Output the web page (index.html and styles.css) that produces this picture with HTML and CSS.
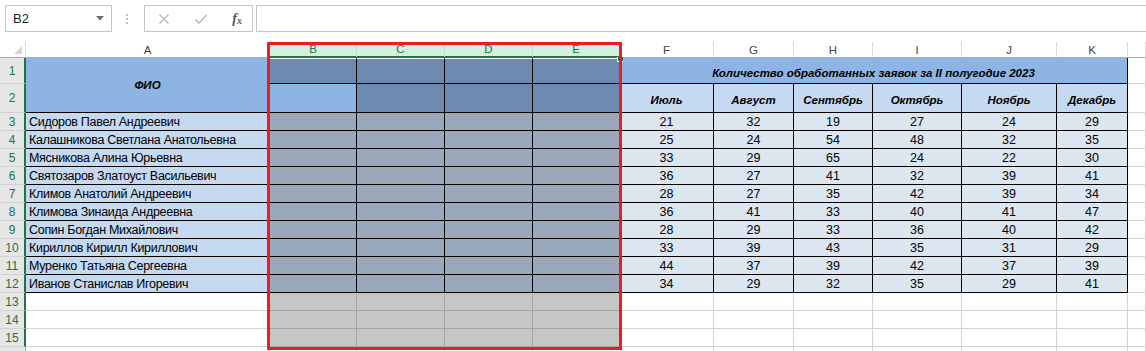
FILE: index.html
```html
<!DOCTYPE html>
<html lang="ru">
<head>
    <meta charset="UTF-8">
    <title>Книга1 - Excel</title>
    <link rel="stylesheet" href="styles.css">
</head>
<body>
    <!-- formula bar -->
    <div class="formula-bar">
        <div class="name-box">
            <span>B2</span>
            <svg class="drop" width="8" height="5" viewBox="0 0 8 5"><polygon points="0,0 8,0 4,4.5" fill="#6f6f6f"/></svg>
        </div>
        <svg class="grip" width="4" height="12" viewBox="0 0 4 12">
            <circle cx="2" cy="2" r="1.1" fill="#b3b3b3"/>
            <circle cx="2" cy="6" r="1.1" fill="#b3b3b3"/>
            <circle cx="2" cy="10" r="1.1" fill="#b3b3b3"/>
        </svg>
        <div class="fx-box">
            <svg width="12" height="12" viewBox="0 0 12 12"><path d="M1.5 1.5 L10.5 10.5 M10.5 1.5 L1.5 10.5" stroke="#bcbcbc" stroke-width="1.4"/></svg>
            <svg width="14" height="12" viewBox="0 0 14 12"><path d="M1.5 6.5 L5 10 L12.5 2" stroke="#c2c2c2" stroke-width="1.8" fill="none"/></svg>
            <span class="fx">f<sub>x</sub></span>
        </div>
        <div class="formula-input"></div>
    </div>

    <div class="sheet">
        <!-- column headers -->
        <div class="corner">
            <svg width="8" height="8" viewBox="0 0 8 8"><polygon points="8,0 8,8 0,8" fill="#d5d5d5"/></svg>
        </div>
        <div class="ch">A</div>
        <div class="ch sel">B</div>
        <div class="ch sel">C</div>
        <div class="ch sel">D</div>
        <div class="ch sel">E</div>
        <div class="ch">F</div>
        <div class="ch">G</div>
        <div class="ch">H</div>
        <div class="ch">I</div>
        <div class="ch">J</div>
        <div class="ch">K</div>
        <div class="ch"></div>

        <!-- row 1 -->
        <div class="rh">1</div>
        <div class="c t b1 head fio">ФИО</div>
        <div class="c t s1 top"></div><div class="c t s1 top"></div><div class="c t s1 top"></div><div class="c t s1 top"></div>
        <div class="c t b1 head title">Количество обработанных заявок за II полугодие 2023</div>
        <div class="c"></div>

        <!-- row 2 -->
        <div class="rh">2</div>
        <div class="c t b1"></div>
        <div class="c t s1"></div><div class="c t s1"></div><div class="c t s1"></div>
        <div class="c t b2 head month">Июль</div>
        <div class="c t b2 head month">Август</div>
        <div class="c t b2 head month">Сентябрь</div>
        <div class="c t b2 head month">Октябрь</div>
        <div class="c t b2 head month">Ноябрь</div>
        <div class="c t b2 head month">Декабрь</div>
        <div class="c"></div>

        <!-- data rows -->
        <div class="rh">3</div><div class="c t b2 name">Сидоров Павел Андреевич</div>
        <div class="c t s2"></div><div class="c t s2"></div><div class="c t s2"></div><div class="c t s2"></div>
        <div class="c t b3 num">21</div><div class="c t b3 num">32</div><div class="c t b3 num">19</div><div class="c t b3 num">27</div><div class="c t b3 num">24</div><div class="c t b3 num">29</div><div class="c"></div>

        <div class="rh">4</div><div class="c t b2 name">Калашникова Светлана Анатольевна</div>
        <div class="c t s2"></div><div class="c t s2"></div><div class="c t s2"></div><div class="c t s2"></div>
        <div class="c t b3 num">25</div><div class="c t b3 num">24</div><div class="c t b3 num">54</div><div class="c t b3 num">48</div><div class="c t b3 num">32</div><div class="c t b3 num">35</div><div class="c"></div>

        <div class="rh">5</div><div class="c t b2 name">Мясникова Алина Юрьевна</div>
        <div class="c t s2"></div><div class="c t s2"></div><div class="c t s2"></div><div class="c t s2"></div>
        <div class="c t b3 num">33</div><div class="c t b3 num">29</div><div class="c t b3 num">65</div><div class="c t b3 num">24</div><div class="c t b3 num">22</div><div class="c t b3 num">30</div><div class="c"></div>

        <div class="rh">6</div><div class="c t b2 name">Святозаров Златоуст Васильевич</div>
        <div class="c t s2"></div><div class="c t s2"></div><div class="c t s2"></div><div class="c t s2"></div>
        <div class="c t b3 num">36</div><div class="c t b3 num">27</div><div class="c t b3 num">41</div><div class="c t b3 num">32</div><div class="c t b3 num">39</div><div class="c t b3 num">41</div><div class="c"></div>

        <div class="rh">7</div><div class="c t b2 name">Климов Анатолий Андреевич</div>
        <div class="c t s2"></div><div class="c t s2"></div><div class="c t s2"></div><div class="c t s2"></div>
        <div class="c t b3 num">28</div><div class="c t b3 num">27</div><div class="c t b3 num">35</div><div class="c t b3 num">42</div><div class="c t b3 num">39</div><div class="c t b3 num">34</div><div class="c"></div>

        <div class="rh">8</div><div class="c t b2 name">Климова Зинаида Андреевна</div>
        <div class="c t s2"></div><div class="c t s2"></div><div class="c t s2"></div><div class="c t s2"></div>
        <div class="c t b3 num">36</div><div class="c t b3 num">41</div><div class="c t b3 num">33</div><div class="c t b3 num">40</div><div class="c t b3 num">41</div><div class="c t b3 num">47</div><div class="c"></div>

        <div class="rh">9</div><div class="c t b2 name">Сопин Богдан Михайлович</div>
        <div class="c t s2"></div><div class="c t s2"></div><div class="c t s2"></div><div class="c t s2"></div>
        <div class="c t b3 num">28</div><div class="c t b3 num">29</div><div class="c t b3 num">33</div><div class="c t b3 num">36</div><div class="c t b3 num">40</div><div class="c t b3 num">42</div><div class="c"></div>

        <div class="rh">10</div><div class="c t b2 name">Кириллов Кирилл Кириллович</div>
        <div class="c t s2"></div><div class="c t s2"></div><div class="c t s2"></div><div class="c t s2"></div>
        <div class="c t b3 num">33</div><div class="c t b3 num">39</div><div class="c t b3 num">43</div><div class="c t b3 num">35</div><div class="c t b3 num">31</div><div class="c t b3 num">29</div><div class="c"></div>

        <div class="rh">11</div><div class="c t b2 name">Муренко Татьяна Сергеевна</div>
        <div class="c t s2"></div><div class="c t s2"></div><div class="c t s2"></div><div class="c t s2"></div>
        <div class="c t b3 num">44</div><div class="c t b3 num">37</div><div class="c t b3 num">39</div><div class="c t b3 num">42</div><div class="c t b3 num">37</div><div class="c t b3 num">39</div><div class="c"></div>

        <div class="rh">12</div><div class="c t b2 name">Иванов Станислав Игоревич</div>
        <div class="c t s2"></div><div class="c t s2"></div><div class="c t s2"></div><div class="c t s2"></div>
        <div class="c t b3 num">34</div><div class="c t b3 num">29</div><div class="c t b3 num">32</div><div class="c t b3 num">35</div><div class="c t b3 num">29</div><div class="c t b3 num">41</div><div class="c"></div>

        <!-- empty rows -->
        <div class="rh">13</div><div class="c"></div>
        <div class="c s3"></div><div class="c s3"></div><div class="c s3"></div><div class="c s3"></div>
        <div class="c"></div><div class="c"></div><div class="c"></div><div class="c"></div><div class="c"></div><div class="c"></div><div class="c"></div>

        <div class="rh">14</div><div class="c"></div>
        <div class="c s3"></div><div class="c s3"></div><div class="c s3"></div><div class="c s3"></div>
        <div class="c"></div><div class="c"></div><div class="c"></div><div class="c"></div><div class="c"></div><div class="c"></div><div class="c"></div>

        <div class="rh">15</div><div class="c"></div>
        <div class="c s3"></div><div class="c s3"></div><div class="c s3"></div><div class="c s3"></div>
        <div class="c"></div><div class="c"></div><div class="c"></div><div class="c"></div><div class="c"></div><div class="c"></div><div class="c"></div>

        <div class="rh off"></div><div class="c"></div>
        <div class="c"></div><div class="c"></div><div class="c"></div><div class="c"></div>
        <div class="c"></div><div class="c"></div><div class="c"></div><div class="c"></div><div class="c"></div><div class="c"></div><div class="c"></div>

        <!-- overlays -->
        <div class="fill-handle"></div>
        <div class="mark"></div>
    </div>
</body>
</html>
```

FILE: styles.css
```css
/* General */
body {
    margin: 0;
    background: #fff;
    font-family: "Liberation Sans", Arial, sans-serif;
    color: #000;
    overflow: hidden;
}

/* Formula bar */
.formula-bar {
    display: flex;
    align-items: center;
    height: 42px;
    padding: 0 0 5px 5px;
    box-sizing: border-box;
}

.name-box {
    display: flex;
    align-items: center;
    justify-content: space-between;
    width: 107px;
    height: 27px;
    box-sizing: border-box;
    border: 1px solid #c6c6c6;
    padding: 0 7px 0 7px;
    font-size: 13px;
    color: #222;
}

.grip {
    margin: 0 15px 0 13px;
}

.fx-box {
    display: flex;
    align-items: center;
    justify-content: space-between;
    width: 109px;
    height: 27px;
    box-sizing: border-box;
    border: 1px solid #c6c6c6;
    padding: 0 10px 0 13px;
}

.fx {
    font-family: "Liberation Serif", serif;
    font-style: italic;
    font-size: 14px;
    color: #555;
    font-weight: bold;
}

.fx sub {
    font-size: 10px;
    vertical-align: -1px;
}

.formula-input {
    flex: 1;
    height: 27px;
    margin-left: 3px;
    box-sizing: border-box;
    border: 1px solid #c6c6c6;
    border-right: none;
}

/* Sheet grid */
.sheet {
    position: relative;
    display: grid;
    grid-template-columns: 26px 244px 87px 88px 88px 87px 94px 80px 79px 89px 95px 71px 1fr;
    grid-template-rows: 16px 26px 29px repeat(13, 18px) 18px;
    font-size: 12.5px;
}

.sheet > div {
    box-sizing: border-box;
}

.corner {
    display: flex;
    align-items: flex-end;
    justify-content: flex-end;
    padding: 0 3px 3px 0;
    border-right: 1px solid #dadada;
    border-bottom: 1px solid #ababab;
}

.ch {
    display: flex;
    align-items: center;
    justify-content: center;
    font-size: 11.5px;
    color: #444;
    border-right: 1px solid #dadada;
    border-bottom: 1px solid #ababab;
}

.ch.sel {
    background: #d3f0e0;
    color: #217346;
    border-right-color: #c3dccd;
    border-bottom: 2px solid #217346;
}

.rh {
    display: flex;
    align-items: center;
    justify-content: center;
    font-size: 12px;
    color: #217346;
    background: #e6e6e6;
    border-right: 2px solid #217346;
    border-bottom: 1px solid #d2d2d2;
}

.rh.off {
    color: #444;
    border-right: 1px solid #ababab;
}

/* Cells */
.c {
    display: flex;
    align-items: flex-end;
    line-height: 15px;
    white-space: nowrap;
    border-right: 1px solid #d4d4d4;
    border-bottom: 1px solid #d4d4d4;
}

.c.t {
    border-color: #000;
}

.b1 { background: #8eb4e3; }
.b2 { background: #c5d9f1; }
.b3 { background: #dce6f1; }

/* selection shading */
.s1 { background: #6d8bb0; }
.s2 { background: #99a8bb; }
.s3 { background: #c6c6c6; border-color: #a5a5a5; }

.s1.top {
    box-shadow: inset 0 1px 0 #fff;
}

.name {
    padding-left: 3px;
    letter-spacing: -0.3px;
}

.num {
    justify-content: center;
}

.head {
    justify-content: center;
    font-weight: bold;
    font-style: italic;
    font-size: 11.5px;
}

.fio {
    grid-row: span 2;
    align-items: center;
}

.title {
    grid-column: span 6;
    align-items: center;
    padding-top: 5px;
}

.month {
    align-items: center;
    padding-top: 4px;
}

/* Overlays */
.fill-handle {
    position: absolute;
    left: 617px;
    top: 15px;
    width: 6px;
    height: 5px;
    background: #217346;
    border-left: 1px solid #fff;
    border-bottom: 1px solid #fff;
}

.mark {
    position: absolute;
    left: 267px;
    top: 0;
    width: 355px;
    height: 308px;
    border: 3px solid #ed1c24;
    pointer-events: none;
}
```
